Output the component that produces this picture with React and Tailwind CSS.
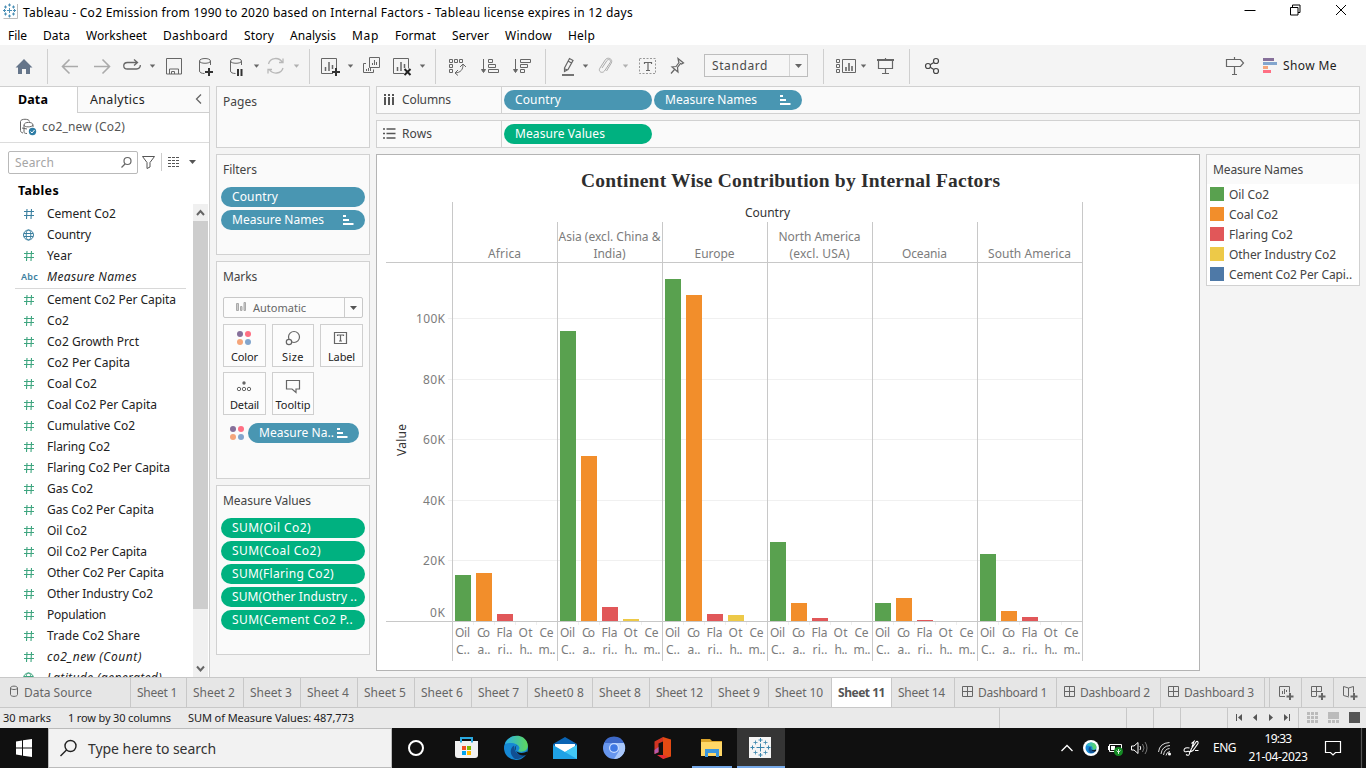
import { useLayoutEffect, useRef } from "react";

// Text run whose letter spacing is adjusted so that it spans a given width.
function Fit({ w, className = "", children }) {
  const ref = useRef(null);
  useLayoutEffect(() => {
    const el = ref.current;
    el.style.letterSpacing = "0px";
    const natural = el.getBoundingClientRect().width;
    el.style.letterSpacing = (w - natural) / Math.max(1, String(children).length) + "px";
  }, [w, children]);
  return (
    <span ref={ref} className={"inline-block shrink-0 whitespace-pre " + className}>
      {children}
    </span>
  );
}

// Icon slot: the drawing uses window coordinates, the slot sits in the flow.
function Ic({ x, y = 45, w, h = 41, c = "#666", sw = 1, children }) {
  return (
    <svg className="block shrink-0" width={w} height={h} viewBox={`${x} ${y} ${w} ${h}`} fill="none" stroke={c} strokeWidth={sw}>
      {children}
    </svg>
  );
}

const Caret = ({ x, y = 66, c = "#666" }) => <path d={`M${x - 2.7} ${y - 1.5}h5.4l-2.7 3.2z`} fill={c} stroke="none" />;
const Sep = () => <div className="mt-1 h-[35px] w-px shrink-0 bg-[#cfcfcf]" />;

function TitleBar() {
  return (
    <div className="flex h-[24px] shrink-0 bg-white">
      <Ic x={0} y={0} w={23} h={24} c="#4a8fb5">
        <path d="M3.5 18.5h14V4" stroke="#bbb" />
        <path d="M9.500 8v5M7 10.500h5M9.500 3.500v3M8 5h3M9.500 14.500v3M8 16h3M3 10.500h3M4.500 9v3M13 10.500h3M14.500 9v3M5.500 5.500v3M4 7h3M13.500 5.500v3M12 7h3M5.500 12.500v3M4 14h3M13.500 12.500v3M12 14h3" />
      </Ic>
      <Fit w={610} className="mt-1 text-[12px] leading-[18px] text-black">
        Tableau - Co2 Emission from 1990 to 2020 based on Internal Factors - Tableau license expires in 12 days
      </Fit>
      <div className="flex-1" />
      <Ic x={1230} y={0} w={136} h={24} c="#000">
        <path d="M1244.500 10.500h11M1290.500 7.500h7.500v7.500h-7.500zM1292.500 7v-2h7.500v7.500h-2M1336 5l10 10M1346 5l-10 10" />
      </Ic>
    </div>
  );
}

function MenuBar() {
  const items = [["File", 19], ["Data", 27], ["Worksheet", 61], ["Dashboard", 65], ["Story", 30], ["Analysis", 46], ["Map", 27], ["Format", 41], ["Server", 37], ["Window", 47], ["Help", 27]];
  return (
    <div className="flex h-[21px] shrink-0 gap-4 bg-white pl-2 text-[12px] leading-[24px] text-black">
      {items.map(([t, w]) => (
        <Fit key={t} w={w}>{t}</Fit>
      ))}
    </div>
  );
}

const Db = ({ x }) => (
  <path d={`M${x} 61c0-3.300 11-3.300 11 0v4M${x} 61c0 3 11 3 11 0M${x} 61v10c0 1.500 2 2.500 5 2.500`} />
);

function Toolbar() {
  return (
    <div className="flex h-[41px] shrink-0 bg-[#f4f4f4]">
      <Ic x={0} w={47}>
        <path d="M15.500 67.500L24 59l8.500 8.500H30V74h-4v-5h-4v5h-4v-6.500z" fill="#65758a" stroke="none" />
      </Ic>
      <Sep />
      <Ic x={48} w={69} c="#aaa" sw={1.6}>
        <path d="M78 66.500H63M69.500 59.500l-7 7 7 7M94 66.500h15M102.500 59.500l7 7-7 7" />
      </Ic>
      <Ic x={117} w={42} sw={1.3}>
        <path d="M137 62.500h-9.500c-5 0-5 6.500 0 6.500h9c2.500 0 4-2 3.800-4M134 59.500l3.500 3-3.500 3" />
        <Caret x={152.500} />
      </Ic>
      <Ic x={159} w={32}>
        <path d="M166.500 58.500h15v15.500h-15zM169.500 74v-5h9v5M171.500 74v-2.500h3V74" />
      </Ic>
      <Ic x={191} w={32}>
        <Db x={199.500} />
        <path d="M209 68v8M205 72h8" stroke="#333" strokeWidth="2" />
      </Ic>
      <Ic x={223} w={40}>
        <Db x={230.500} />
        <path d="M238 69v7M241.500 69v7" stroke="#333" strokeWidth="2" />
        <Caret x={256.500} />
      </Ic>
      <Ic x={263} w={46} c="#b8b8b8" sw={1.3}>
        <path d="M268.500 64c1.500-6.500 10.500-7.500 14-1.500M283 68c-1.500 6-10.500 7-14 1M283 58.500v4h-4M268 73.500v-4h4" />
        <Caret x={296.500} c="#b0b0b0" />
      </Ic>
      <Sep />
      <Ic x={310} w={48}>
        <path d="M333 73.500h-11.500v-15h15v10" />
        <path d="M325.500 71v-4M329 71v-9M332.500 69v-4" strokeWidth="1.500" />
        <path d="M336 68v8M332 72h8" stroke="#333" strokeWidth="2" />
        <Caret x={350.500} />
      </Ic>
      <Ic x={358} w={29}>
        <path d="M369.500 57.500h10v10h-10zM366 63.500h-2.500v9h10v-3M372.500 65v-2M374.500 65v-5M376.500 65v-3M366.500 71v-2M368.500 71v-3M370.500 71v-3" />
      </Ic>
      <Ic x={387} w={48}>
        <path d="M404 73.500h-10.500v-15h15v10" />
        <path d="M397.500 71v-4M401 71v-9M404.500 68v-4" strokeWidth="1.500" />
        <path d="M404.500 69l6 6M410.500 69l-6 6" stroke="#222" strokeWidth="2" />
        <Caret x={422.500} />
      </Ic>
      <Sep />
      <Ic x={436} w={38}>
        <path d="M449.500 59.500h3v3h-3zM454.500 59.500h3v3h-3zM459.500 59.500h3v3h-3zM449.500 64.500h3v3h-3zM449.500 69.500h3v3h-3zM463 64.500c0 5-2 8-8 8.500M460 67l3-3 3 3M458 70l-3 3 3 2.500" />
      </Ic>
      <Ic x={474} w={32}>
        <path d="M483.500 59v13M488.500 59.500h4v3h-4zM488.500 64.500h7v3h-7zM488.500 69.500h10v3h-10z" />
        <path d="M481.500 69.500h4l-2 3z" fill="#666" />
      </Ic>
      <Ic x={506} w={39}>
        <path d="M515.500 59v13M520.500 59.500h10v3h-10zM520.500 64.500h7v3h-7zM520.500 69.500h4v3h-4z" />
        <path d="M513.500 69.500h4l-2 3z" fill="#666" />
      </Ic>
      <Sep />
      <Ic x={546} w={48} sw={1.2}>
        <path d="M564.500 68l5-9.500 3.500 2-5 9-3.500 2zM568 61l3.500 2M565 69l3 1" />
        <path d="M562 75h12" strokeWidth="1.800" />
        <Caret x={585.500} />
      </Ic>
      <Ic x={594} w={39} c="#aaa">
        <path d="M602 68l5-7.500c1.500-2 4.500-.5 3.200 2L604.500 71c-2.500 3-6.500.5-4.700-2.700l5.500-8.500c2.700-3.500 8-.5 6 3.200L606.500 71" />
        <Caret x={625.500} c="#b0b0b0" />
      </Ic>
      <Ic x={633} w={30}>
        <path d="M639.500 58.500h16v15h-16z" stroke="#999" strokeDasharray="2 1.500" />
        <path d="M644.500 64v-1.500h7v1.500M648 62.500v8M646 70.500h4" strokeWidth="1.200" />
      </Ic>
      <Ic x={663} w={41} sw={1.2}>
        <path d="M678 58.500l5.500 4.500-2 1-1-.5-3 4 .5 4.500-6-5 4-.5 3-4-.5-1.500zM674.500 69.500l-3.500 4" />
      </Ic>
      <div className="mt-[9px] flex h-[23px] w-[104px] shrink-0 border border-[#bdbdbd] bg-[#f6f6f6]">
        <div className="w-[85px] border-r border-[#d4d4d4] pl-[7px] text-[12px] leading-[21px] text-[#4a4a4a]"><Fit w={56}>Standard</Fit></div>
        <Ic x={790} y={55} w={17} h={21}><path d="M795 64h7l-3.500 4z" fill="#666" stroke="none" /></Ic>
      </div>
      <div className="w-[15px] shrink-0" />
      <Sep />
      <Ic x={824} w={46}>
        <path d="M836.500 59.500h3v3h-3zM836.500 64.500h3v3h-3zM836.500 69.500h3v3h-3zM842.500 59.500h13v13h-13z" />
        <path d="M846 71v-4M849 71v-8M852 71v-5" strokeWidth="1.600" />
        <Caret x={863.500} />
      </Ic>
      <Ic x={870} w={39}>
        <path d="M877 60h17" strokeWidth="2" /><path d="M878.500 60v8.500h14V60M885.500 58v1M885.500 68.500v5M882 73.500h7" strokeWidth="1.200" />
      </Ic>
      <Sep />
      <Ic x={910} w={45} c="#444" sw={1.2}>
        <circle cx="928" cy="66" r="2.500" /><circle cx="936" cy="61" r="2.500" /><circle cx="936" cy="71" r="2.500" /><path d="M930.200 64.700l3.600-2.300M930.200 67.300l3.600 2.300" />
      </Ic>
      <div className="flex-1" />
      <Ic x={1220} w={35} sw={1.2}>
        <path d="M1226.500 59.500h14l3 3.500-3 3.500h-14zM1234.500 57v2M1234.500 66.500v8M1232 74.500h5" />
      </Ic>
      <Ic x={1255} w={28}>
        <g stroke="none"><path d="M1263 58h11v3h-11z" fill="#86709a" /><path d="M1263 62h14v3h-14z" fill="#82a5cd" /><path d="M1263 66h5v3h-5z" fill="#f5a57a" /><path d="M1263 70h8v3h-8z" fill="#ff6f83" /></g>
      </Ic>
      <div className="w-[83px] text-[12px] leading-[42px] text-[#1c1c1c]"><Fit w={54}>Show Me</Fit></div>
    </div>
  );
}

const FIELDS = [
  ["hb", "Cement Co2", 69], ["gb", "Country", 44], ["h", "Year", 25], ["abc", "Measure Names", 90], ["line"],
  ["h", "Cement Co2 Per Capita", 129], ["h", "Co2", 22], ["h", "Co2 Growth Prct", 92], ["h", "Co2 Per Capita", 83], ["h", "Coal Co2", 50],
  ["h", "Coal Co2 Per Capita", 110], ["h", "Cumulative Co2", 88], ["h", "Flaring Co2", 63], ["h", "Flaring Co2 Per Capita", 123], ["h", "Gas Co2", 46],
  ["h", "Gas Co2 Per Capita", 107], ["h", "Oil Co2", 40], ["h", "Oil Co2 Per Capita", 100], ["h", "Other Co2 Per Capita", 117], ["h", "Other Industry Co2", 106],
  ["h", "Population", 59], ["h", "Trade Co2 Share", 93], ["h", "co2_new (Count)", 95, 1], ["g", "Latitude (generated)", 115, 1],
];

function FieldIcon({ k }) {
  if (k === "abc") return <div className="w-[47px] pl-[21px] text-[9px] font-semibold text-[#3b7ea0] not-italic"><Fit w={17}>Abc</Fit></div>;
  const globe = k[0] === "g";
  const c = k === "hb" || k === "gb" ? "#3a7f9f" : "#3ea57f";
  return (
    <Ic x={0} y={0} w={47} h={21} c={c}>
      {globe ? (
        <><circle cx="28.500" cy="11" r="5" /><ellipse cx="28.500" cy="11" rx="2.300" ry="5" /><path d="M24 9.500h9M24 12.500h9" /></>
      ) : (
        <path d="M27 6l-.5 10M31.500 6l-.5 10M24 8.500h10M24 12.500h10" strokeWidth="1.100" />
      )}
    </Ic>
  );
}

function DataPane() {
  return (
    <div className="flex h-[591px] w-[210px] shrink-0 flex-col overflow-hidden border-t border-r border-[#cfcfcf] bg-white">
      <div className="flex h-[26px] shrink-0 text-[12.5px] leading-[25px]">
        <div className="w-[77px] pl-[18px] font-bold text-black"><Fit w={30}>Data</Fit></div>
        <div className="flex flex-1 border-b border-l border-[#cfcfcf] bg-[#fafafa] pl-3 text-[#222]">
          <Fit w={55}>Analytics</Fit>
          <div className="flex-1" />
          <Ic x={190} y={87} w={19} h={24} sw={1.3}><path d="M201 94.500l-4.500 4.500 4.500 4.500" /></Ic>
        </div>
      </div>
      <div className="flex h-[30px] shrink-0 border-b border-[#dcdcdc] text-[12px] leading-[28px] text-[#555]">
        <Ic x={0} y={113} w={42} h={29} c="#666">
          <path d="M20.500 121.500c0-3 9-3 9 0M20.500 121.500v9c0 1.500 1 2 2.500 2.500M24 125c0-3.500 9-3.500 9 0v2M24 125c0 2.500 8 2.500 9 0M24 125v7c0 1 1 1.500 3 1.500M22 128l5 1" />
          <circle cx="32.500" cy="131.500" r="3.700" fill="#2f7ea6" stroke="none" /><path d="M30.500 131.500l1.500 1.500 2.500-3" stroke="#fff" />
        </Ic>
        <Fit w={83}>co2_new (Co2)</Fit>
      </div>
      <div className="mt-2 ml-2 flex h-[23px] shrink-0">
        <div className="flex h-[23px] w-[130px] rounded-[2px] border border-[#b9b9b9] pl-1.5 text-[12px] leading-[21px] text-[#a5a5a5]">
          <Fit w={39}>Search</Fit>
          <div className="flex-1" />
          <Ic x={115} y={152} w={21} h={21} sw={1.2}><circle cx="126.500" cy="161" r="3.500" /><path d="M124 164l-3.500 3.500" /></Ic>
        </div>
        <Ic x={138} y={151} w={71} h={23} c="#555">
          <path d="M142.500 156.500h12l-4.500 6v4.500l-3 1.500v-6z" /><path d="M161.500 153v18" stroke="#ccc" />
          <path d="M168 157.500h12M168 160.500h12M168 163.500h12M168 166.500h12" strokeDasharray="3 1" />
          <path d="M189 160h7l-3.500 4z" fill="#555" stroke="none" />
        </Ic>
      </div>
      <div className="h-[30px] shrink-0 pl-[18px] text-[12.5px] leading-[33px] font-bold text-black"><Fit w={41}>Tables</Fit></div>
      <div className="flex h-[473px] shrink-0">
        <div className="h-[473px] w-[193px] overflow-hidden text-[12px] leading-[21px] text-[#222]">
          <div className="-mt-px">
            {FIELDS.map(([k, t, w, it], i) =>
              k === "line" ? (
                <div key={i} className="mt-px mr-[7px] ml-[15px] h-px bg-[#d8d8d8]" />
              ) : (
                <div key={i} className={"flex h-[21px] items-center " + (it || k === "abc" ? "italic" : "")}>
                  <FieldIcon k={k} />
                  <Fit w={w}>{t}</Fit>
                </div>
              )
            )}
          </div>
        </div>
        <div className="w-[15px] bg-[#f0f0f0]">
          <Ic x={193} y={204} w={15} h={17} sw={2}><path d="M197 215l3.500-4 3.500 4" /></Ic>
          <div className="h-[388px] bg-[#cdcdcd]" />
          <div className="h-[50px]" />
          <Ic x={193} y={659} w={15} h={18} sw={2}><path d="M197 666.500l3.500 4 3.500-4" /></Ic>
        </div>
      </div>
    </div>
  );
}

function Pill({ t, w, green, sort, cls }) {
  return (
    <div className={"flex h-5 shrink-0 items-center rounded-full pl-[11px] text-[12px] leading-[20px] text-white " + (green ? "bg-[#00b180] " : "bg-[#4996b2] ") + cls}>
      <Fit w={w}>{t}</Fit>
      {sort && (
        <><div className="flex-1" /><Ic x={0} y={0} w={22} h={20} c="#fff" sw={2}><path d="M0 6h3M0 10h6M0 14h10.500" /></Ic></>
      )}
    </div>
  );
}

const Dots = () => (
  <g stroke="none"><circle cx="240" cy="334" r="3" fill="#86709a" /><circle cx="248" cy="334" r="3" fill="#ff6f83" /><circle cx="240" cy="342" r="3" fill="#f5a57a" /><circle cx="248" cy="342" r="3" fill="#82a5cd" /></g>
);

function MarkButton({ t, w, iw, children, vx, cls }) {
  return (
    <div className={"flex h-[43px] flex-col items-center border border-[#cfcfcf] bg-[#fcfcfc] text-[11px] leading-[14px] text-[#222] " + cls}>
      <Ic x={vx} y={325} w={iw} h={25} sw={1.2}>{children}</Ic>
      <Fit w={w}>{t}</Fit>
    </div>
  );
}

function Cards() {
  const card = "shrink-0 border border-[#d1d1d1] bg-[#fafafa] text-[12px] text-[#444] ";
  return (
    <div className="ml-1.5 flex w-[154px] shrink-0 flex-col gap-1.5">
      <div className={card + "h-[62px] pt-[5px] pl-1.5 leading-[20px]"}><Fit w={34}>Pages</Fit></div>
      <div className={card + "h-[101px] pt-[5px] leading-[20px]"}>
        <Fit w={34} className="ml-1.5">Filters</Fit>
        <div className="mt-[7px] ml-1 flex flex-col gap-[3px]">
          <Pill t="Country" w={46} cls="w-[144px]" />
          <Pill t="Measure Names" w={92} sort cls="w-[144px]" />
        </div>
      </div>
      <div className={card + "h-[218px] pt-[5px] leading-[20px]"}>
        <Fit w={34} className="ml-1.5">Marks</Fit>
        <div className="mt-2.5 ml-1.5 flex h-[21px] w-[140px] rounded-[2px] border border-[#c8c8c8] bg-[#fcfcfc] text-[11px] leading-[20px] text-[#666]">
          <Ic x={224} y={298} w={29} h={19} c="#aaa"><path d="M236.500 303.500h2v7h-2zM240.500 306.500h1.500v4h-1.500zM244 302.500h1.500v8h-1.500z" fill="#ccc" /></Ic>
          <Fit w={53}>Automatic</Fit>
          <div className="flex-1" />
          <Ic x={344} y={298} w={18} h={19}><path d="M344.500 298v19" stroke="#ccc" /><path d="M350 306h7l-3.500 4z" fill="#555" stroke="none" /></Ic>
        </div>
        <div className="mt-1.5 ml-1.5 grid grid-cols-[43px_42px_43px] gap-x-1.5 gap-y-[5px]">
          <MarkButton t="Color" w={27} vx={224} iw={41} cls="w-[43px]"><Dots /></MarkButton>
          <MarkButton t="Size" w={22} vx={273} iw={40} cls="w-[42px]"><circle cx="294" cy="337" r="5.500" /><circle cx="289" cy="342" r="2.700" fill="#fafafa" /></MarkButton>
          <MarkButton t="Label" w={27} vx={321} iw={41} cls="w-[43px]"><path d="M334.500 332.500h12v11h-12zM337.500 336v-1h6v1M340.500 335v6M339 341h3" /></MarkButton>
          <MarkButton t="Detail" w={29} vx={224} iw={41} cls="w-[43px]"><circle cx="244" cy="335" r="1.700" fill="#666" stroke="none" /><circle cx="239" cy="341" r="1.700" strokeWidth="1" /><circle cx="244" cy="341" r="1.700" strokeWidth="1" /><circle cx="249" cy="341" r="1.700" strokeWidth="1" /></MarkButton>
          <MarkButton t="Tooltip" w={35} vx={273} iw={40} cls="w-[42px]"><path d="M286.500 332.500h13v8.500h-3.500v3.500l-4-3.500h-5.500z" /></MarkButton>
        </div>
        <div className="mt-2 ml-[7px] flex">
          <Ic x={231} y={328} w={24} h={20}><Dots /></Ic>
          <Pill t="Measure Na.." w={75} sort cls="w-[111px]" />
        </div>
      </div>
      <div className={card + "h-[170px] pt-[5px] leading-[20px]"}>
        <Fit w={88} className="ml-1.5">Measure Values</Fit>
        <div className="mt-[7px] ml-1 flex flex-col gap-[3px]">
          {[["SUM(Oil Co2)", 79], ["SUM(Coal Co2)", 89], ["SUM(Flaring Co2)", 102], ["SUM(Other Industry ..", 125], ["SUM(Cement Co2 P..", 121]].map(([t, w]) => (
            <Pill key={t} t={t} w={w} green cls="w-[144px]" />
          ))}
        </div>
      </div>
    </div>
  );
}

function Shelf({ label, w, rows, children }) {
  return (
    <div className="flex h-[28px] shrink-0 border border-[#d1d1d1] bg-[#fafafa] text-[12px] leading-[26px] text-[#444]">
      <div className="flex w-[125px] border-r border-[#d1d1d1]">
        <Ic x={377} y={87} w={25} h={26} c="#555" sw={1.6}>
          {rows ? <path d="M383 95h2M383 99.500h2M383 104h2M386.500 95h9M386.500 99.500h9M386.500 104h9" /> : <path d="M385 94v2M389 94v2M393 94v2M385 97v8M389 97v8M393 97v8" strokeWidth="2" />}
        </Ic>
        <Fit w={w}>{label}</Fit>
      </div>
      <div className="flex items-center gap-0.5 pl-0.5">{children}</div>
    </div>
  );
}

const BARS = [[575, 573, 614], [331, 456, 607, 619], [279, 295, 614, 615], [542, 603, 618], [603, 598, 620], [554, 611, 617]];
const COLORS = ["#59a14f", "#f28e2b", "#e15759", "#edc948", "#4e79a7"];
const HEADS = [[["Africa", 33]], [["Asia (excl. China &", 102], ["India)", 32]], [["Europe", 40]], [["North America", 82], ["(excl. USA)", 60]], [["Oceania", 45]], [["South America", 83]]];
const CATS = [["Oil", 15, "C..", 14], ["Co", 13, "a..", 13], ["Fla", 16, "ri..", 15], ["Ot", 14, "h..", 13], ["Ce", 14, "m..", 17]];

function Chart() {
  return (
    <svg className="block" width="822" height="515" viewBox="377 155 822 515" fontFamily="'Noto Sans', sans-serif" fontSize="12" fill="#7c7c7c">
      <text x="581" y="187" textLength="419" fontFamily="'Liberation Serif', serif" fontWeight="bold" fontSize="19.500" fill="#2e2e2e">Continent Wise Contribution by Internal Factors</text>
      <text x="745" y="217" textLength="45" fill="#333">Country</text>
      {[318, 379, 439, 500, 560].map((y, i) => (
        <g key={y}>
          <path d={`M448 ${y + 0.5}h634`} stroke="#f0f0f0" />
          <text x={i ? 423 : 416} y={y + 5} textLength={i ? 22 : 29}>{`${100 - i * 20}K`}</text>
        </g>
      ))}
      <text x="430" y="617" textLength="15">0K</text>
      <text x="-456" y="406" transform="rotate(-90)" textLength="32" fill="#333">Value</text>
      <path d="M473.500 622v3M494.500 622v3M515.500 622v3M536.500 622v3M578.500 622v3M599.500 622v3M620.500 622v3M641.500 622v3M683.500 622v3M704.500 622v3M725.500 622v3M746.500 622v3M788.500 622v3M809.500 622v3M830.500 622v3M851.500 622v3M893.500 622v3M914.500 622v3M935.500 622v3M956.500 622v3M998.500 622v3M1019.500 622v3M1040.500 622v3M1061.500 622v3" stroke="#efefef" />
      {BARS.map((tops, p) => tops.map((t, i) => <rect key={p + "-" + i} x={455 + p * 105 + i * 21} y={t} width="16" height={621 - t} fill={COLORS[i]} />))}
      <path d="M452.500 202v459M1082.500 202v459M557.500 222v439M662.500 222v439M767.500 222v439M872.500 222v439M977.500 222v439M386 262.500h697M386 621.500h697" stroke="#c8c8c8" fill="none" />
      {HEADS.map((ls, p) => ls.map(([t, w], i) => (
        <text key={t} x={504.5 + p * 105 - w / 2} y={258 - (ls.length - 1 - i) * 17} textLength={w}>{t}</text>
      )))}
      {HEADS.map((_, p) => CATS.map(([a, wa, b, wb], i) => {
        const cx = 462.5 + p * 105 + i * 21;
        return (
          <g key={p + "-" + i}>
            <text x={cx - wa / 2} y="637" textLength={wa}>{a}</text>
            <text x={cx - wb / 2 + 0.5} y="654" textLength={wb}>{b}</text>
          </g>
        );
      }))}
    </svg>
  );
}

function Legend() {
  const items = [["Oil Co2", 40], ["Coal Co2", 49], ["Flaring Co2", 64], ["Other Industry Co2", 107], ["Cement Co2 Per Capi..", 123]];
  const sw = ["bg-[#59a14f]", "bg-[#f28e2b]", "bg-[#e15759]", "bg-[#edc948]", "bg-[#4e79a7]"];
  return (
    <div className="h-[132px] w-[154px] border border-[#d1d1d1] bg-white text-[12px] text-[#444]">
      <div className="h-[29px] bg-[#fafafa] pl-1.5 leading-[30px]"><Fit w={90}>Measure Names</Fit></div>
      {items.map(([t, w], i) => (
        <div key={t} className="flex h-5 items-center gap-[5px] pl-[3px] leading-[18px]">
          <div className={"h-[14px] w-[14px] " + sw[i]} /><Fit w={w} className="mt-0.5">{t}</Fit>
        </div>
      ))}
    </div>
  );
}

function SheetTabs() {
  const tabs = [["Sheet 1", 40, "w-[56px]"], ["Sheet 2", 42, "w-[57px]"], ["Sheet 3", 42, "w-[57px]"], ["Sheet 4", 42, "w-[57px]"], ["Sheet 5", 42, "w-[57px]"], ["Sheet 6", 42, "w-[57px]"], ["Sheet 7", 41, "w-[56px]"], ["Sheet0 8", 50, "w-[65px]"], ["Sheet 8", 42, "w-[57px]"], ["Sheet 12", 47, "w-[62px]"], ["Sheet 9", 42, "w-[57px]"], ["Sheet 10", 48, "w-[63px]"], ["Sheet 11", 47, "w-[60px]"], ["Sheet 14", 47, "w-[63px]"]];
  const dash = [["Dashboard 1", 69, "w-[102px]"], ["Dashboard 2", 70, "w-[104px]"], ["Dashboard 3", 70, "w-[104px]"]];
  return (
    <div className="flex h-[31px] shrink-0 border-y border-[#c8c8c8] bg-[#e6e6e6] text-[12px] leading-[30px] text-[#666]">
      <div className="flex w-[131px] border-r border-[#c8c8c8]">
        <Ic x={0} y={678} w={24} h={29}><path d="M10.500 688v6.500c0 2.500 7 2.500 7 0V688c0-2.500-7-2.500-7 0c0 2 7 2 7 0" /></Ic>
        <Fit w={68}>Data Source</Fit>
      </div>
      {tabs.map(([t, w, c]) => (
        <div key={t} className={"flex shrink-0 border-r border-[#c8c8c8] pl-1.5 " + c + (t === "Sheet 11" ? " bg-white font-bold text-[#555]" : "")}><Fit w={w}>{t}</Fit></div>
      ))}
      {dash.map(([t, w, c]) => (
        <div key={t} className={"flex shrink-0 border-r border-[#c8c8c8] " + c}>
          <Ic x={955} y={678} w={23} h={29}><path d="M962.500 686.500h10v10h-10zM967.500 686.500v10M962.500 691.500h10" /></Ic>
          <Fit w={w}>{t}</Fit>
        </div>
      ))}
      <div className="w-[5px] shrink-0 border-r border-[#c8c8c8]" />
      <Ic x={1270} y={678} w={32} h={29}><path d="M1301.500 678v29" stroke="#c8c8c8" /><path d="M1285 696.500h-5.500v-10h10v6M1282.500 694v-3M1284.500 694v-5M1286.500 692v-2" /><path d="M1290 693v7M1286.500 696.500h7" strokeWidth="2" /></Ic>
      <Ic x={1302} y={678} w={32} h={29}><path d="M1333.500 678v29" stroke="#c8c8c8" /><path d="M1316 696.500h-4.500v-10h10v5M1311.500 691.500h10M1316.500 686.500v10" /><path d="M1322 693v7M1318.500 696.500h7" strokeWidth="2" /></Ic>
      <Ic x={1334} y={678} w={32} h={29}><path d="M1349 697l-5.500-1.500v-9l5 1.500 5-1.500v6M1348.500 688v8" /><path d="M1354 693v7M1350.500 696.500h7" strokeWidth="2" /></Ic>
    </div>
  );
}

function StatusBar() {
  return (
    <div className="flex h-[20px] shrink-0 bg-[#eaeaea] pl-[3px] text-[11px] leading-[20px] text-[#222]">
      <Fit w={48}>30 marks</Fit>
      <Fit w={103} className="ml-[17px]">1 row by 30 columns</Fit>
      <Fit w={166} className="ml-[17px]">SUM of Measure Values: 487,773</Fit>
      <div className="flex-1" />
      <Ic x={998} y={708} w={368} h={20}>
        <path d="M999.500 708v20M1126.500 708v20M1153.500 708v20M1180.500 708v20M1227.500 708v20M1298.500 708v20" stroke="#c8c8c8" />
        <g fill="#555" stroke="none"><path d="M1236 714h1v7h-1zM1242 714v7l-4-3.500zM1257 714v7l-4-3.500zM1269 714v7l4-3.500zM1284 714v7l4-3.500zM1289 714h1v7h-1z" />
          <path d="M1349 712h11v11h-11z" /></g>
        <g fill="#bbb" stroke="none"><path d="M1307 712h3v3h-3zM1311 712h3v3h-3zM1315 712h3v3h-3zM1307 716h3v3h-3zM1311 716h3v3h-3zM1315 716h3v3h-3zM1307 720h3v3h-3zM1311 720h3v3h-3zM1315 720h3v3h-3zM1328 712h11v7h-11zM1328 720h3v3h-3zM1332 720h3v3h-3zM1336 720h3v3h-3z" /></g>
      </Ic>
    </div>
  );
}

function EdgeLogo() {
  return (
    <g stroke="none">
      <circle cx="516" cy="748" r="12" fill="#1688d4" />
      <path d="M505 744c3-10 19-11.500 22.500-.5 1.500 6-3 9-8 8-2.500-.5 0-2 0-3.500-1-5-9-6-14.500-4z" fill="url(#edgeTop)" />
      <path d="M514 745.500c-5 3-4 10 1 13.500 6 .5 10-3 11.500-6-4 2-9 1.500-11-1.500-1-2-1-4-1.500-6z" fill="#114f93" />
      <path d="M517.500 745c-3 1-3.500 5 0 7 3 1.500 7 1 9.500-.5l.5 1.500-1.500 2c-3 1-7 0-9-2.500-2-2.500-2-6.500.5-7.500z" fill="#101010" />
    </g>
  );
}

function Taskbar() {
  const y = 728, h = 40;
  return (
    <div className="flex h-10 shrink-0 bg-[#101010] text-white">
      <Ic x={0} y={y} w={48} h={h}><path d="M16 741.500l6-1v7h-6zM23 740.300l9-1.300v8.500h-9zM16 748.500h6v7l-6-1zM23 748.500h9v8.500l-9-1.300z" fill="#fff" stroke="none" /></Ic>
      <div className="flex w-[344px] border border-[#bbb] bg-[#f2f2f2] text-[14px] leading-[39px] text-[#333]">
        <Ic x={49} y={729} w={39} h={38} c="#222" sw={1.4}><circle cx="70.500" cy="746" r="5.500" /><path d="M66.500 750L60.500 756" /></Ic>
        <Fit w={128}>Type here to search</Fit>
      </div>
      <Ic x={392} y={y} w={49} h={h} c="#fff" sw={2}><circle cx="416" cy="748" r="7" /></Ic>
      <Ic x={441} y={y} w={50} h={h}>
        <path d="M461 742v-4h11v4" stroke="#2aa9e0" strokeWidth="2" />
        <path d="M455 741h23v14q0 3-3 3h-17q-3 0-3-3z" fill="#f1f1f1" stroke="none" />
        <path d="M461 742.500v-2M472 742.500v-2" stroke="#2aa9e0" strokeWidth="2" />
        <g stroke="none"><path d="M462 746h4v4h-4z" fill="#f25022" /><path d="M467 746h4v4h-4z" fill="#7fba00" /><path d="M462 751h4v4h-4z" fill="#00a4ef" /><path d="M467 751h4v4h-4z" fill="#ffb900" /></g>
      </Ic>
      <Ic x={491} y={y} w={49} h={h}>
        <defs><linearGradient id="edgeTop"><stop offset="0" stopColor="#2ab0e8" /><stop offset="1" stopColor="#5fd85a" /></linearGradient></defs>
        <EdgeLogo />
      </Ic>
      <Ic x={540} y={y} w={49} h={h}>
        <g stroke="none"><path d="M553 744l12-7 12 7v4h-24z" fill="#0a64b4" /><path d="M555 744h20v9h-20z" fill="#fff" /><path d="M553 745l12 7 12-7v14h-24z" fill="#1fa2e6" /><path d="M577 745v14l-12-7z" fill="#42c8f5" /></g>
      </Ic>
      <Ic x={589} y={y} w={49} h={h}>
        <g stroke="none"><circle cx="614" cy="748" r="11" fill="#6796ee" /><path d="M604 743a11 11 0 0 1 20 0h-10z" fill="#3e69c8" /><path d="M614 759a11 11 0 0 0 10-16h-10l5 8z" fill="#a9c7fa" /><circle cx="614" cy="748" r="5" fill="#c8dcff" /><circle cx="614" cy="748" r="3.800" fill="#3f78e4" /></g>
      </Ic>
      <Ic x={638} y={y} w={48} h={h}>
        <g stroke="none"><path d="M663 737l8 2.500v17l-8 2.500z" fill="#e34a13" /><path d="M663 737v4.500l-4.500 2v9l-4 1.500v-12.500z" fill="#d23422" /><path d="M654.500 750v4l4-2v-5z" fill="#b55ab0" /><path d="M657 755h6.500l4 1.500-4.500 2.500z" fill="#e52b35" /></g>
      </Ic>
      <Ic x={686} y={y} w={51} h={h}>
        <g stroke="none"><path d="M701 739h9l2 2h10v15h-21z" fill="#dba42a" /><path d="M701 742h21v14h-21z" fill="#ffd767" /><path d="M705 749h14v8h-3v-4h-8v4h-3z" fill="#3b96dd" /><path d="M692 766h40v2h-40z" fill="#76a9e8" /></g>
      </Ic>
      <Ic x={737} y={y} w={48} h={h} c="#3985ac">
        <path d="M737 728h48v40h-48z" fill="#353535" stroke="none" /><path d="M737 766h48v2h-48z" fill="#76a9e8" stroke="none" /><path d="M749 737h22v21h-22z" fill="#f5f5f5" stroke="none" />
        <path d="M760.500 743.500v8M756.500 747.500h8M760.500 738v4M758.500 740h4M760.500 753v4M758.500 755h4M750.500 747.500h4M752.500 745.500v4M766.500 747.500h4M768.500 745.500v4" />
        <path d="M755.500 740.500v4M753.500 742.500h4M765.500 740.500v4M763.500 742.500h4M755.500 750.500v4M753.500 752.500h4M765.500 750.500v4M763.500 752.500h4" strokeWidth=".8" />
      </Ic>
      <div className="flex-1" />
      <Ic x={1055} y={y} w={25} h={h} c="#fff" sw={1.3}><path d="M1061.500 751l5.500-5.500 5.500 5.500" /></Ic>
      <Ic x={1080} y={y} w={24} h={h}><circle cx="1091" cy="748" r="8" fill="#fff" stroke="none" /><g transform="translate(1091 748) scale(.46) translate(-516 -748)"><EdgeLogo /></g></Ic>
      <Ic x={1104} y={y} w={22} h={h} c="#fff">
        <path d="M1109.500 744.500h12v7h-12zM1108.500 746v4" /><path d="M1111 746h4v4h-4z" fill="#fff" stroke="none" /><circle cx="1118.500" cy="751.500" r="4.500" fill="#148b24" stroke="none" /><path d="M1118.500 754v-5M1116.500 750.500l2 2 2-2" strokeWidth=".8" />
      </Ic>
      <Ic x={1126} y={y} w={26} h={h} c="#fff"><path d="M1131.500 746v4h2.500l4 3.500v-11l-4 3.500zM1140 746q1.500 2 0 4" /><path d="M1142.500 744q3 4 0 8M1145 742q4 6 0 12" stroke="#777" /></Ic>
      <Ic x={1152} y={y} w={25} h={h} c="#ddd"><path d="M1158.500 752q1-9 11-9.500M1161 754q1-8 9-8.500M1163.500 755q1-6 6-6.500M1166 755.500q.5-3.500 4-4" /><circle cx="1169.500" cy="754" r="1.500" fill="#fff" stroke="none" /></Ic>
      <Ic x={1177} y={y} w={36} h={h} c="#fff" sw={1.1}><path d="M1190 752l1.500-3.500 5-7q2-.5 1.500 2l-5 7zM1189.500 748q-5-1-5.500 2 0 2.500 3 1.500t2.500 2-3.500 1M1192 747l2-5.500-2.500 2M1195 750.500h3.500" /></Ic>
      <Fit w={23} className="text-[12px] leading-[40px]">ENG</Fit>
      <div className="ml-[10px] flex w-[64px] flex-col items-center pt-[2px] text-[12px] leading-[18px]">
        <Fit w={27}>19:33</Fit><Fit w={59}>21-04-2023</Fit>
      </div>
      <Ic x={1310} y={y} w={56} h={h} c="#fff" sw={1.2}><path d="M1325.500 741.500h15v11h-5l-2.500 2.500-2.500-2.500h-5z" /><path d="M1361.500 728v40" stroke="#555" /></Ic>
    </div>
  );
}

export default function App() {
  return (
    <div className="flex h-[768px] w-[1366px] flex-col overflow-hidden bg-[#f4f4f4] font-['Noto_Sans',sans-serif]">
      <TitleBar />
      <MenuBar />
      <Toolbar />
      <div className="flex h-[591px] shrink-0">
        <DataPane />
        <Cards />
        <div className="ml-1.5 flex w-[984px] shrink-0 flex-col gap-1.5">
          <Shelf label="Columns" w={49}>
            <Pill t="Country" w={46} cls="w-[148px]" />
            <Pill t="Measure Names" w={92} sort cls="w-[148px]" />
          </Shelf>
          <Shelf label="Rows" w={30} rows>
            <Pill t="Measure Values" w={90} green cls="w-[148px]" />
          </Shelf>
          <div className="flex gap-1.5">
            <div className="h-[517px] w-[824px] border border-[#b4b4b4] bg-white"><Chart /></div>
            <Legend />
          </div>
        </div>
      </div>
      <SheetTabs />
      <StatusBar />
      <Taskbar />
    </div>
  );
}
